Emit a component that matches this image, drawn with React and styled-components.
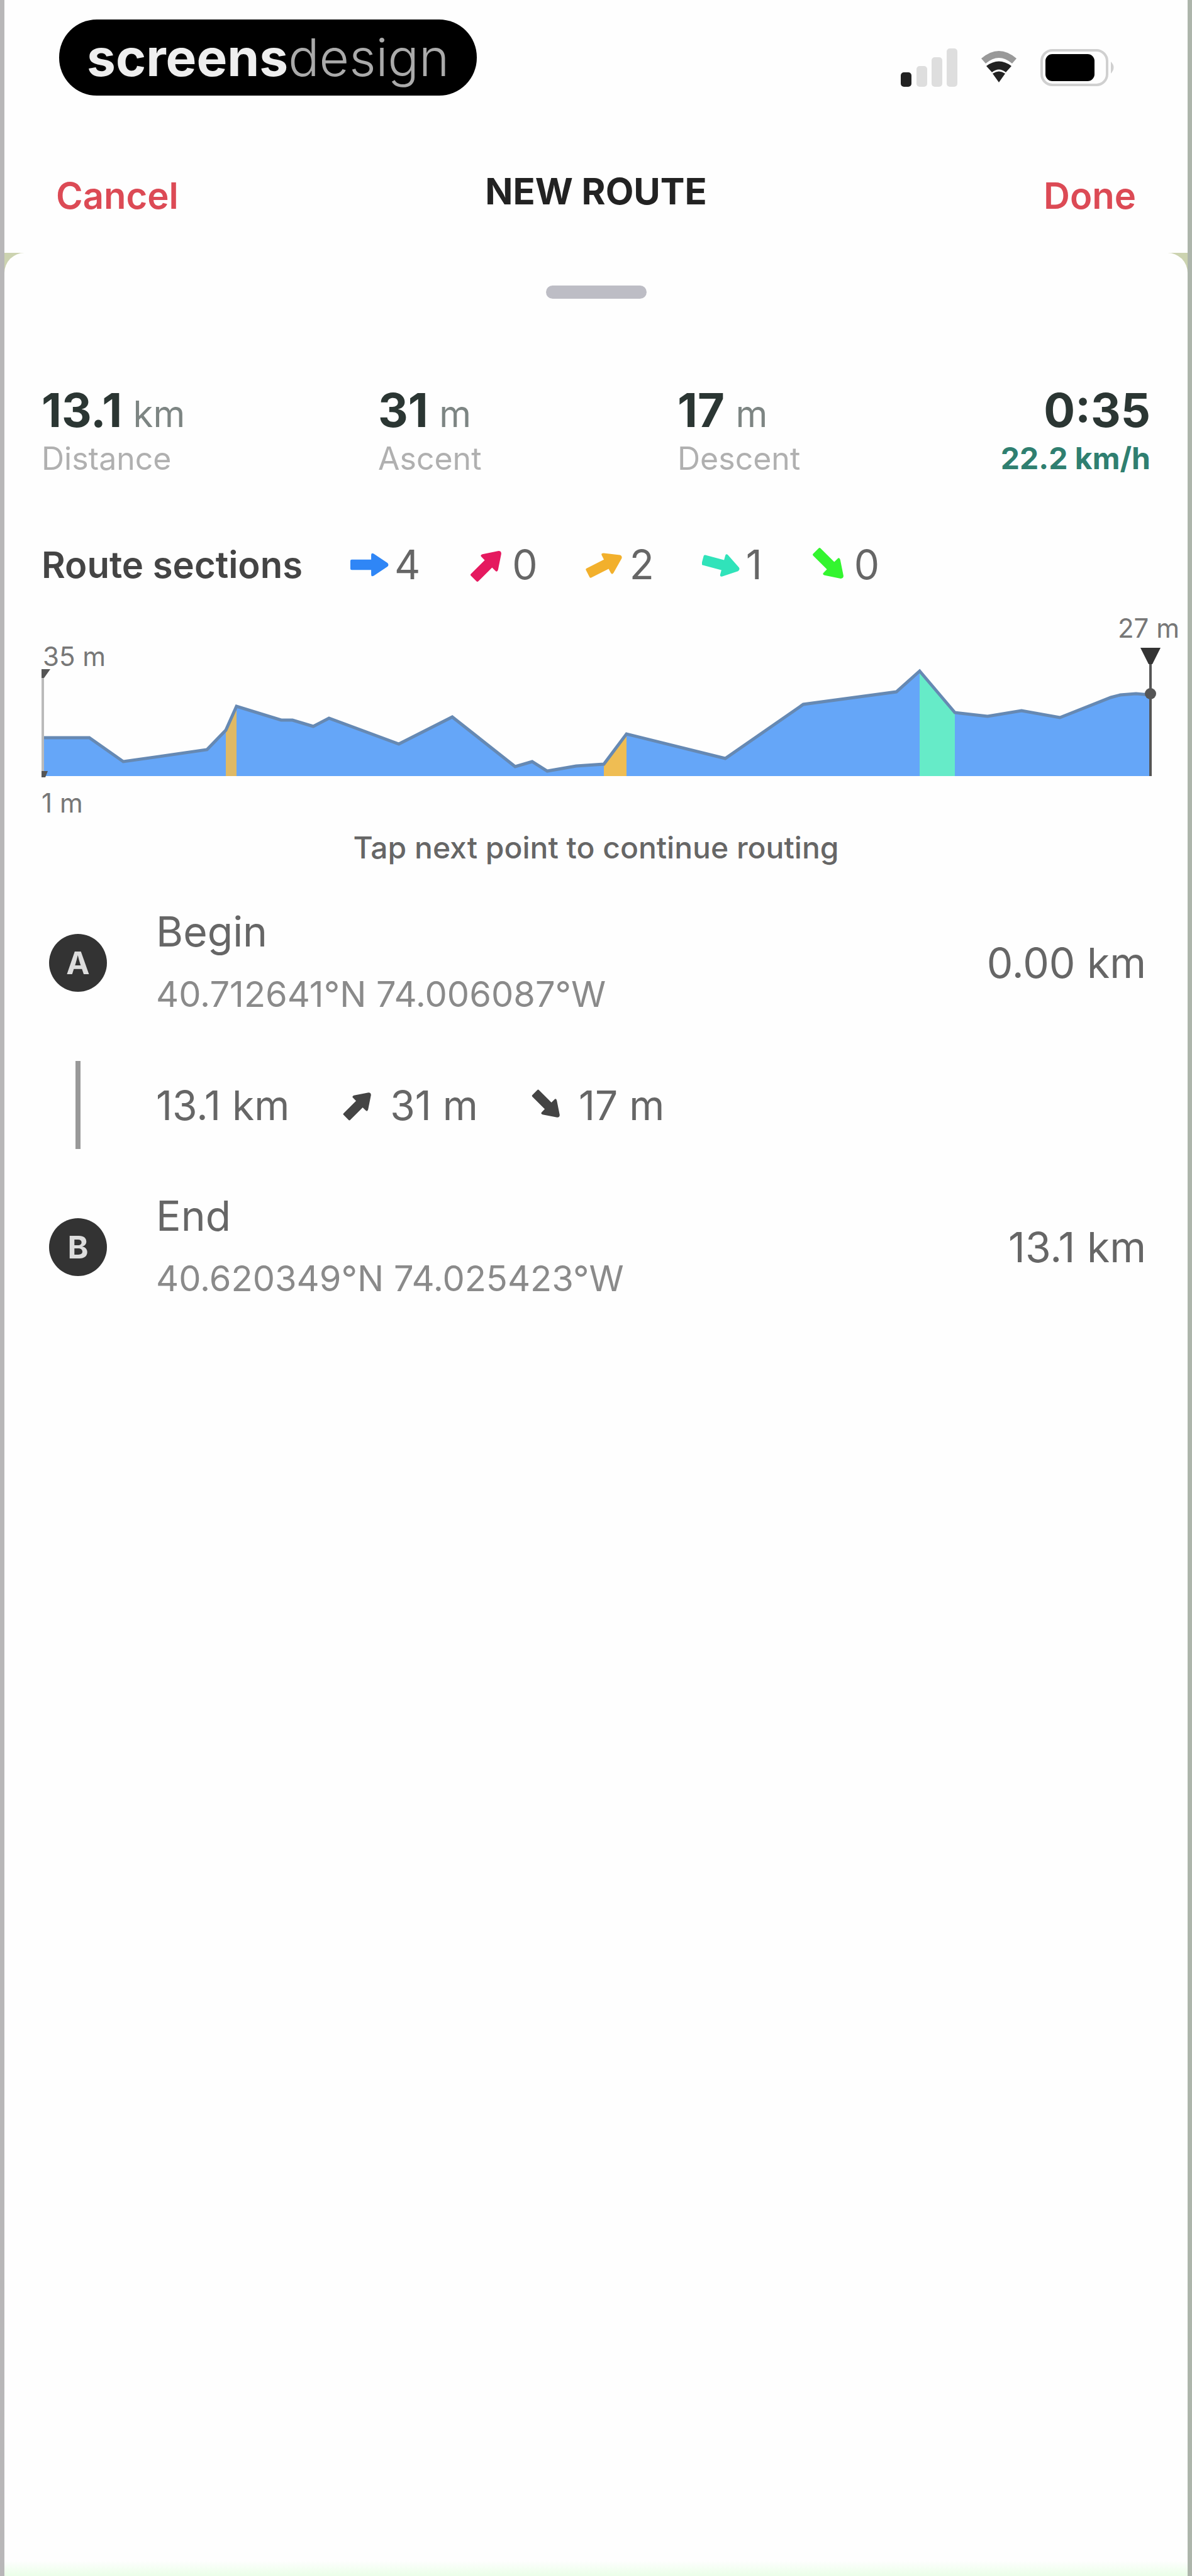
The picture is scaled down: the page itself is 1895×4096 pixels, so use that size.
import React from 'react'
import styled, {createGlobalStyle} from 'styled-components'

const sections = [
  {name: 'Flat', color: '#2f86f6', angle: 0, count: 4},
  {name: 'Steep climb', color: '#e5195f', angle: -45, count: 0},
  {name: 'Climb', color: '#f2b02c', angle: -27, count: 2},
  {name: 'Descent', color: '#30e3ba', angle: 15, count: 1},
  {name: 'Steep descent', color: '#33f52f', angle: 45, count: 0}
]

// x, y of the elevation line, left to right
const profile = [
  [0, 199], [76, 199], [130, 237], [263, 218], [293, 187], [310, 149],
  [381, 171], [399, 171], [432, 181], [457, 168], [568, 209], [653, 166],
  [753, 245], [780, 237], [804, 252], [850, 244], [894, 241], [930, 193],
  [1087, 232], [1211, 146], [1359, 126], [1396, 93], [1452, 159],
  [1504, 165], [1558, 156], [1619, 167], [1700, 135], [1715, 131],
  [1740, 129], [1763, 131]
]
const BASE = 260

const linePath = points => 'M' + points.map(p => p.join(' ')).join(' L')
const areaPath = points =>
  `${linePath(points)} L${points[points.length - 1][0]} ${BASE} L${points[0][0]} ${BASE} Z`

const Arrow = ({color, angle, size}) => (
  <svg width={size} height={size} viewBox="0 0 60 60" aria-hidden="true">
    <path
      d="M2 22h30v-7q0-4 4-2l21 14q3 3 0 6L36 47q-4 2-4-2v-7H2q-2 0-2-2V24q0-2 2-2z"
      fill={color}
      transform={`rotate(${angle} 30 30)`}
    />
  </svg>
)

const StatusIcons = () => (
  <svg width="346" height="64" viewBox="0 0 346 64" aria-hidden="true">
    <rect x="2" y="40" width="17" height="23" rx="5" fill="#222" />
    <rect x="27" y="30" width="17" height="33" rx="5" fill="#dedede" />
    <rect x="51" y="16" width="17" height="47" rx="5" fill="#dedede" />
    <rect x="75" y="2" width="17" height="61" rx="5" fill="#dedede" />
    <path d="M130 18q28-24 56 0l-7 8q-21-18-42 0z" fill="#999" />
    <path d="M138 30q20-15 40 0l-9 10q-11-9-22 0z" fill="#222" />
    <path d="M148 42q10-7 20 0l-10 14z" fill="#222" />
    <rect x="226" y="5" width="104" height="55" rx="17" fill="none" stroke="#d0d0d0" strokeWidth="4" />
    <rect x="232" y="11" width="78" height="43" rx="11" fill="#000" />
    <path d="M336 23q9 9 0 19z" fill="#d0d0d0" />
  </svg>
)

const ElevationChart = () => (
  <Chart viewBox="0 0 1763 325" role="img" aria-label="Elevation profile">
    <path d={areaPath(profile)} fill="#65a6f8" />
    <path d={areaPath(profile.slice(4, 6))} fill="#dfb965" />
    <path d={areaPath(profile.slice(16, 18))} fill="#efbd53" />
    <path d={areaPath(profile.slice(21, 23))} fill="#66ebc8" />
    <path d={linePath(profile)} fill="none" stroke="#6689b3" strokeWidth="5" />
    <path d="M2 96V260" stroke="#bbb" strokeWidth="4" />
    <path d="M0 90h14l-10 14H0zM0 252h10l-4 10H0z" fill="#555" />
    <path d="M1763 80V260" stroke="#555" strokeWidth="4" />
    <path d="M1747 56h32l-13 26h-6z" fill="#333" />
    <circle cx="1763" cy="129" r="9" fill="#555" />
    <text x="2" y="85">35 m</text>
    <text x="0" y="318">1 m</text>
    <text x="1760" y="40" textAnchor="middle">27 m</text>
  </Chart>
)

const App = () => (
  <Page>
    <GlobalStyle />
    <Top>
      <StatusBar>
        <Brand>
          <b>screens</b>design
        </Brand>
        <StatusIcons />
      </StatusBar>
      <NavBar>
        <NavButton type="button">Cancel</NavButton>
        <Title>NEW ROUTE</Title>
        <NavButton type="button">Done</NavButton>
      </NavBar>
    </Top>
    <Sheet>
      <Handle />
      <Stats>
        <div>
          <Value>13.1 <Unit>km</Unit></Value>
          <Label>Distance</Label>
        </div>
        <div>
          <Value>31 <Unit>m</Unit></Value>
          <Label>Ascent</Label>
        </div>
        <div>
          <Value>17 <Unit>m</Unit></Value>
          <Label>Descent</Label>
        </div>
        <Time>
          <Value>0:35</Value>
          <Speed>22.2 km/h</Speed>
        </Time>
      </Stats>
      <Sections>
        <SectionsTitle>Route sections</SectionsTitle>
        {sections.map(section => (
          <Section key={section.name}>
            <Arrow color={section.color} angle={section.angle} size={62} />
            {section.count}
          </Section>
        ))}
      </Sections>
      <ElevationChart />
      <Hint>Tap next point to continue routing</Hint>
      <Row>
        <Marker><Badge>A</Badge></Marker>
        <Place>
          <Name>Begin</Name>
          <Coords>40.712641°N 74.006087°W</Coords>
        </Place>
        <Name>0.00 km</Name>
      </Row>
      <Row>
        <Marker><Connector /></Marker>
        <Leg>
          <span>13.1 km</span>
          <LegItem><Arrow color="#444" angle={-45} size={56} />31 m</LegItem>
          <LegItem><Arrow color="#444" angle={45} size={56} />17 m</LegItem>
        </Leg>
      </Row>
      <Row>
        <Marker><Badge>B</Badge></Marker>
        <Place>
          <Name>End</Name>
          <Coords>40.620349°N 74.025423°W</Coords>
        </Place>
        <Name>13.1 km</Name>
      </Row>
    </Sheet>
  </Page>
)

export default App

const GlobalStyle = createGlobalStyle`
  body {
    margin: 0;
    font-family: Inter, 'Liberation Sans', sans-serif;
    color: #444;
  }
`

const Page = styled.div`
  box-sizing: border-box;
  display: flex;
  flex-direction: column;
  min-height: 100vh;
  border-left: 7px solid #b8b7b8;
  border-right: 7px solid #adb5ab;
  background: #ccd3b0;
`

const Top = styled.header`
  background: #fefefe;
`

const StatusBar = styled.div`
  display: flex;
  align-items: flex-end;
  justify-content: space-between;
  padding: 31px 112px 0 87px;

  svg {
    margin-bottom: 13px;
  }
`

const Brand = styled.div`
  display: flex;
  align-items: center;
  height: 121px;
  padding: 0 44px;
  border-radius: 60px;
  background: #000;
  color: #aaa;
  font-size: 82px;
  font-weight: 300;
  line-height: 104px;

  b {
    color: #eee;
    font-weight: 700;
  }
`

const NavBar = styled.nav`
  display: grid;
  grid-template-columns: 1fr auto 1fr;
  align-items: flex-start;
  padding: 122px 82px 54px;
`

const NavButton = styled.button`
  justify-self: start;
  padding: 0;
  border: 0;
  background: none;
  color: #dc4a55;
  font: 600 58px/74px Inter, sans-serif;

  &:last-child {
    justify-self: end;
  }
`

const Title = styled.h1`
  margin: 0;
  color: #222;
  font-size: 58px;
  font-weight: 700;
  line-height: 60px;
`

const Sheet = styled.main`
  flex: 1;
  padding: 52px 59px 0;
  border-radius: 32px 32px 0 0;
  background: linear-gradient(to top, #eaffe8, #fefefe 24px);
`

const Handle = styled.div`
  width: 160px;
  height: 21px;
  margin: 0 auto 132px;
  border-radius: 11px;
  background: #bdbdc5;
`

const Stats = styled.div`
  display: grid;
  grid-template-columns: 535fr 476fr 376fr 376fr;
  margin-bottom: 101px;
`

const Value = styled.div`
  color: #2b3633;
  font-size: 74px;
  font-weight: 700;
  line-height: 90px;
`

const Unit = styled.span`
  color: #7d8583;
  font-size: 58px;
  font-weight: 400;
  line-height: 1;
`

const Label = styled.div`
  color: #b0b0b0;
  font-size: 50px;
  line-height: 64px;
`

const Time = styled.div`
  text-align: right;
`

const Speed = styled.div`
  color: #2f7f70;
  font-size: 48px;
  font-weight: 700;
  line-height: 64px;
`

const Sections = styled.div`
  display: flex;
  align-items: center;
  gap: 76px;
  margin-bottom: 40px;
  line-height: 72px;
`

const SectionsTitle = styled.h2`
  margin: 0;
  color: #444;
  font-size: 58px;
  font-weight: 600;
`

const Section = styled.div`
  display: flex;
  align-items: center;
  gap: 8px;
  color: #666;
  font-size: 64px;
`

const Chart = styled.svg`
  display: block;
  width: 100%;
  overflow: visible;

  text {
    fill: #777;
    font-size: 42px;
  }
`

const Hint = styled.p`
  margin: 19px 0 40px;
  color: #666;
  font-size: 48px;
  font-weight: 500;
  line-height: 60px;
  text-align: center;
`

const Row = styled.div`
  display: flex;
  align-items: center;
  min-height: 226px;
  padding-right: 7px;
`

const Marker = styled.div`
  display: flex;
  justify-content: center;
  width: 116px;
  margin-right: 66px;
`

const Badge = styled.div`
  width: 92px;
  border-radius: 50%;
  background: #333;
  color: #ddd;
  font-size: 50px;
  font-weight: 700;
  line-height: 92px;
  text-align: center;
`

const Connector = styled.div`
  width: 8px;
  height: 140px;
  background: #999;
`

const Place = styled.div`
  flex: 1;
`

const Name = styled.div`
  color: #666;
  font-size: 66px;
  line-height: 100px;
`

const Coords = styled.div`
  color: #8a8a8a;
  font-size: 56px;
  line-height: 100px;
`

const Leg = styled.div`
  display: flex;
  align-items: center;
  gap: 82px;
  color: #666;
  font-size: 64px;
`

const LegItem = styled.span`
  display: flex;
  align-items: center;
  gap: 22px;
`
